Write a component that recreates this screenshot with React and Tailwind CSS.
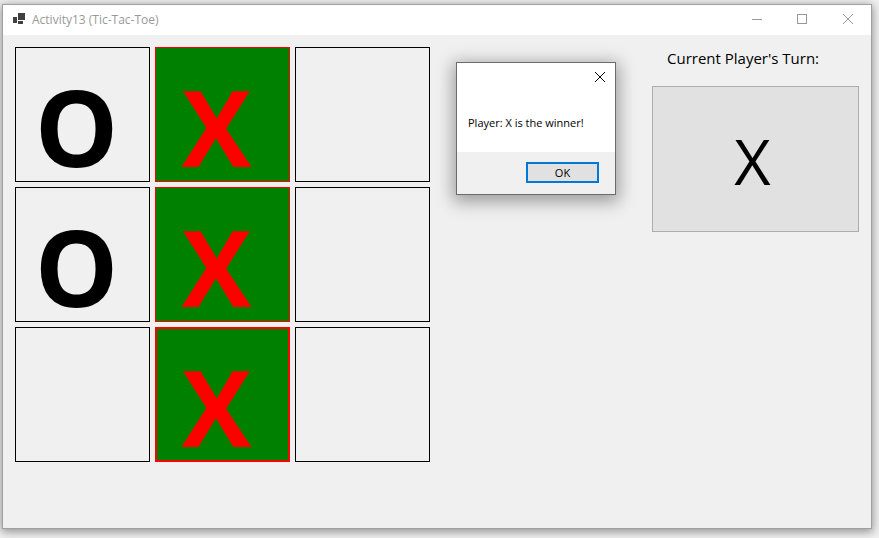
const board = [
  { mark: "O", style: "border border-black text-black" },
  { mark: "X", style: "border border-[#ff0000] bg-[#008000] text-[#ff0000]" },
  { mark: "", style: "border border-black" },
  { mark: "O", style: "border border-black text-black" },
  { mark: "X", style: "border border-[#ff0000] bg-[#008000] text-[#ff0000]" },
  { mark: "", style: "border border-black" },
  { mark: "", style: "border border-black" },
  { mark: "X", style: "border-2 border-[#ff0000] bg-[#008000] text-[#ff0000]" },
  { mark: "", style: "border border-black" },
];

function CloseIcon() {
  return (
    <svg width="10" height="10" viewBox="0 0 10 10" stroke="currentColor" fill="none" aria-hidden="true">
      <path d="M0 0 L10 10 M10 0 L0 10" />
    </svg>
  );
}

function TitleBar() {
  return (
    <header className="flex h-[30px] items-center bg-white pl-[10px] text-[#999999]">
      <svg className="mb-[3px]" width="12" height="11" viewBox="0 0 12 11" fill="#404040" shapeRendering="crispEdges" aria-hidden="true">
        <path d="M5 0h7v7H5zM0 4h4v6H0zM5 8h5v3H5z" />
      </svg>
      <h1 className="ml-[7px] text-[12px]">Activity13 (Tic-Tac-Toe)</h1>
      <div className="ml-auto flex h-full pb-[2px]">
        <button type="button" aria-label="Minimize" className="flex w-[45px] items-center justify-center">
          <svg width="10" height="10" viewBox="0 0 10 10" stroke="currentColor" aria-hidden="true">
            <path d="M0 5.5H10" />
          </svg>
        </button>
        <button type="button" aria-label="Maximize" className="flex w-[46px] items-center justify-center">
          <svg width="10" height="10" viewBox="0 0 10 10" stroke="currentColor" fill="none" aria-hidden="true">
            <rect x="0.5" y="0.5" width="9" height="9" />
          </svg>
        </button>
        <button type="button" aria-label="Close" className="flex w-[46px] items-center justify-center">
          <CloseIcon />
        </button>
      </div>
    </header>
  );
}

function Board() {
  return (
    <div className="grid grid-cols-[repeat(3,135px)] gap-[5px]">
      {board.map((cell, i) => (
        <button
          key={i}
          type="button"
          aria-label={cell.mark ? undefined : "Empty square"}
          className={`flex h-[135px] items-center justify-center pt-[25px] pr-[12px] text-[105px] leading-[100px] font-bold ${cell.style}`}
        >
          {cell.mark}
        </button>
      ))}
    </div>
  );
}

function WinnerDialog() {
  return (
    <div
      role="dialog"
      aria-label="Game result"
      className="absolute top-[62px] left-[456px] w-[160px] border border-[#6b6b6b] bg-white text-[11px] text-black shadow-[0_4px_16px_3px_rgba(0,0,0,0.35)]"
    >
      <div className="flex h-[28px] justify-end">
        <button type="button" aria-label="Close dialog" className="flex w-[30px] items-center justify-center">
          <CloseIcon />
        </button>
      </div>
      <p className="h-[61px] pt-[24px] pl-[11px] leading-4">Player: X is the winner!</p>
      <div className="flex h-[42px] items-start justify-end bg-[#f0f0f0] pt-[10px] pr-4">
        <button type="button" className="h-[21px] w-[73px] border-2 border-[#0078d7] bg-[#e1e1e1] leading-4">
          OK
        </button>
      </div>
    </div>
  );
}

export default function App() {
  return (
    <div className="flex min-h-screen bg-[#f2f2f2] pt-1 pr-[7px] pb-[9px] pl-[2px] font-['Open_Sans',sans-serif]">
      <div className="flex flex-1 flex-col border border-[#a0a0a0] bg-[#f0f0f0] shadow-[0_2px_9px_1px_rgba(0,0,0,0.4)]">
        <TitleBar />
        <main className="flex items-start justify-between p-3">
          <Board />
          <section className="w-[207px] text-black">
            <h2 className="mb-4 pl-[15px] text-[15px] leading-[23px]">Current Player's Turn:</h2>
            <button
              type="button"
              className="flex h-[146px] w-full items-center justify-center border border-[#adadad] bg-[#e1e1e1] pt-1 pr-1.5 text-[63px]"
            >
              X
            </button>
          </section>
        </main>
      </div>
      <WinnerDialog />
    </div>
  );
}
